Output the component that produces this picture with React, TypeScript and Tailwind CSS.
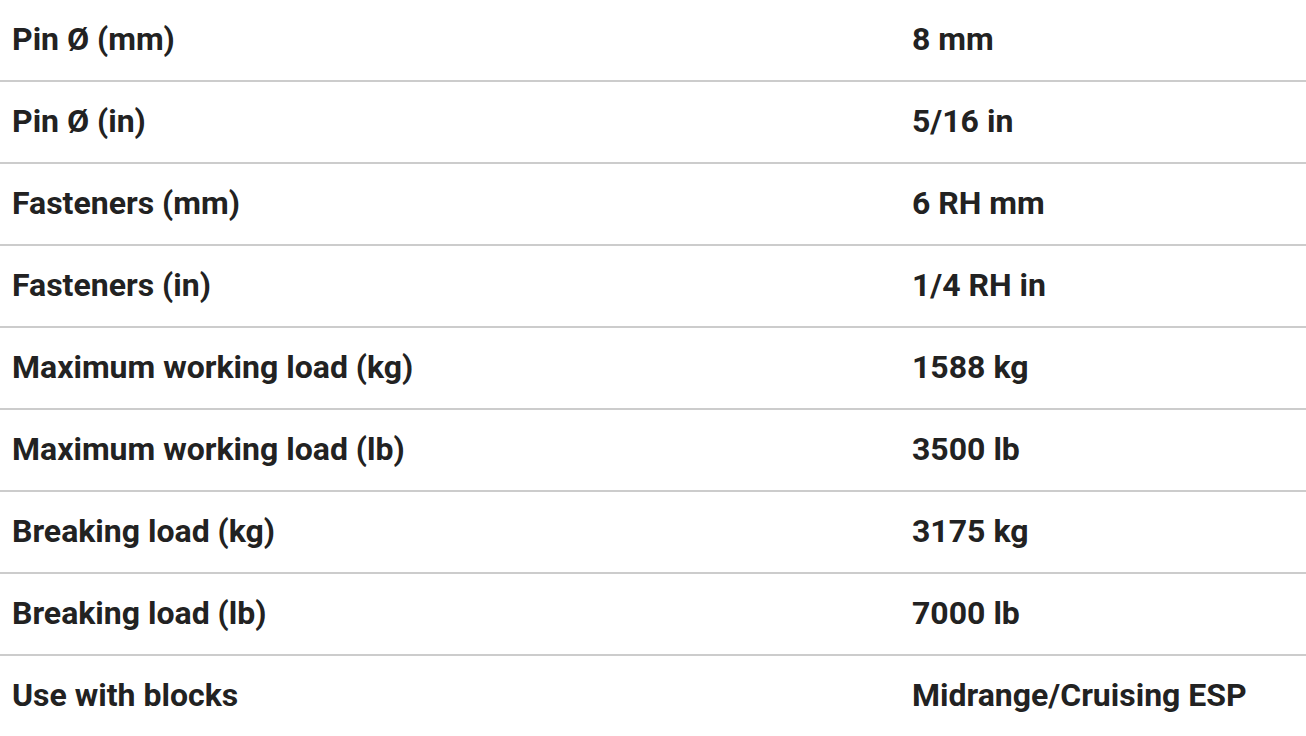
const rows: [string, string][] = [
  ["Pin Ø (mm)", "8 mm"],
  ["Pin Ø (in)", "5/16 in"],
  ["Fasteners (mm)", "6 RH mm"],
  ["Fasteners (in)", "1/4 RH in"],
  ["Maximum working load (kg)", "1588 kg"],
  ["Maximum working load (lb)", "3500 lb"],
  ["Breaking load (kg)", "3175 kg"],
  ["Breaking load (lb)", "7000 lb"],
  ["Use with blocks", "Midrange/Cruising ESP"],
];

export default function App() {
  return (
    <div className="w-[1306px] h-[736px] overflow-hidden bg-white font-['Roboto',sans-serif] text-[32px] font-bold text-[#222]">
      {rows.map(([label, value]) => (
        <div
          key={label}
          className="grid grid-cols-[900px_1fr] items-center h-[82px] px-[12px] pb-[3px] border-b-2 border-[#cccccc]"
        >
          <div>{label}</div>
          <div>{value}</div>
        </div>
      ))}
    </div>
  );
}
